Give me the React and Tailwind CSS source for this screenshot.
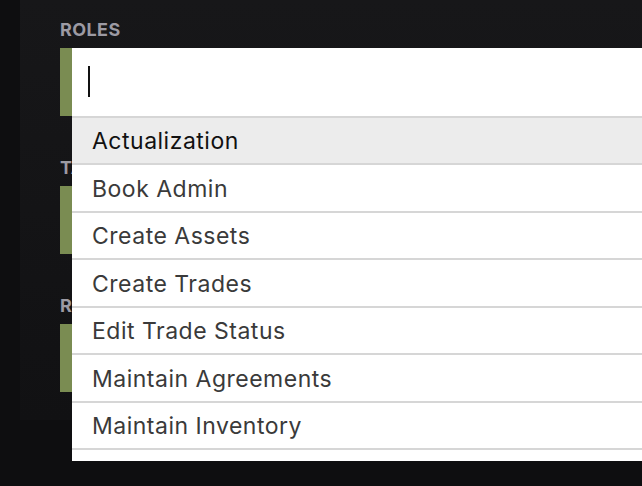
import React from "react";

const items = [
  "Actualization",
  "Book Admin",
  "Create Assets",
  "Create Trades",
  "Edit Trade Status",
  "Maintain Agreements",
  "Maintain Inventory",
];

function Field({ label, children }) {
  return (
    <div className="mb-[42px]">
      <div className="h-[18px] mb-[10px] pt-[1px] text-[18px] leading-[18px] font-bold tracking-[0.4px] text-[#9c9aa3] uppercase">
        {label}
      </div>
      <div className="relative flex h-[68px]">
        <div className="w-3 shrink-0 bg-[#7a8c52]" />
        <div className="flex-1 bg-white relative">{children}</div>
      </div>
    </div>
  );
}

export default function App() {
  return (
    <div
      className="w-[642px] h-[486px] bg-[#0e0e10] overflow-hidden flex"
      style={{ fontFamily: "Inter, Lato, sans-serif" }}
    >
      <div className="w-5 shrink-0" />
      <div className="relative flex-1 h-[420px] bg-gradient-to-b from-[#171719] to-[#111113] pl-10 pt-5">
        <Field label="Roles">
          <div className="absolute left-4 top-[18px] w-[2px] h-[31px] bg-[#111]" />
        </Field>
        <Field label="Tags" />
        <Field label="Regions" />

        <div className="absolute left-[52px] top-[116px] w-[600px] bg-white pb-[11px]">
          {items.map((t, i) => (
            <div
              key={t}
              className={
                "h-[47.43px] border-t-2 border-[#d6d6d6] flex items-center pl-5 pt-[2px] text-[23px] tracking-[0.5px] " +
                (i === 0 ? "bg-[#ececec] text-[#111]" : "bg-white text-[#3a3a3a]")
              }
            >
              {t}
            </div>
          ))}
          <div className="border-t-2 border-[#d6d6d6]" />
        </div>
      </div>
    </div>
  );
}
